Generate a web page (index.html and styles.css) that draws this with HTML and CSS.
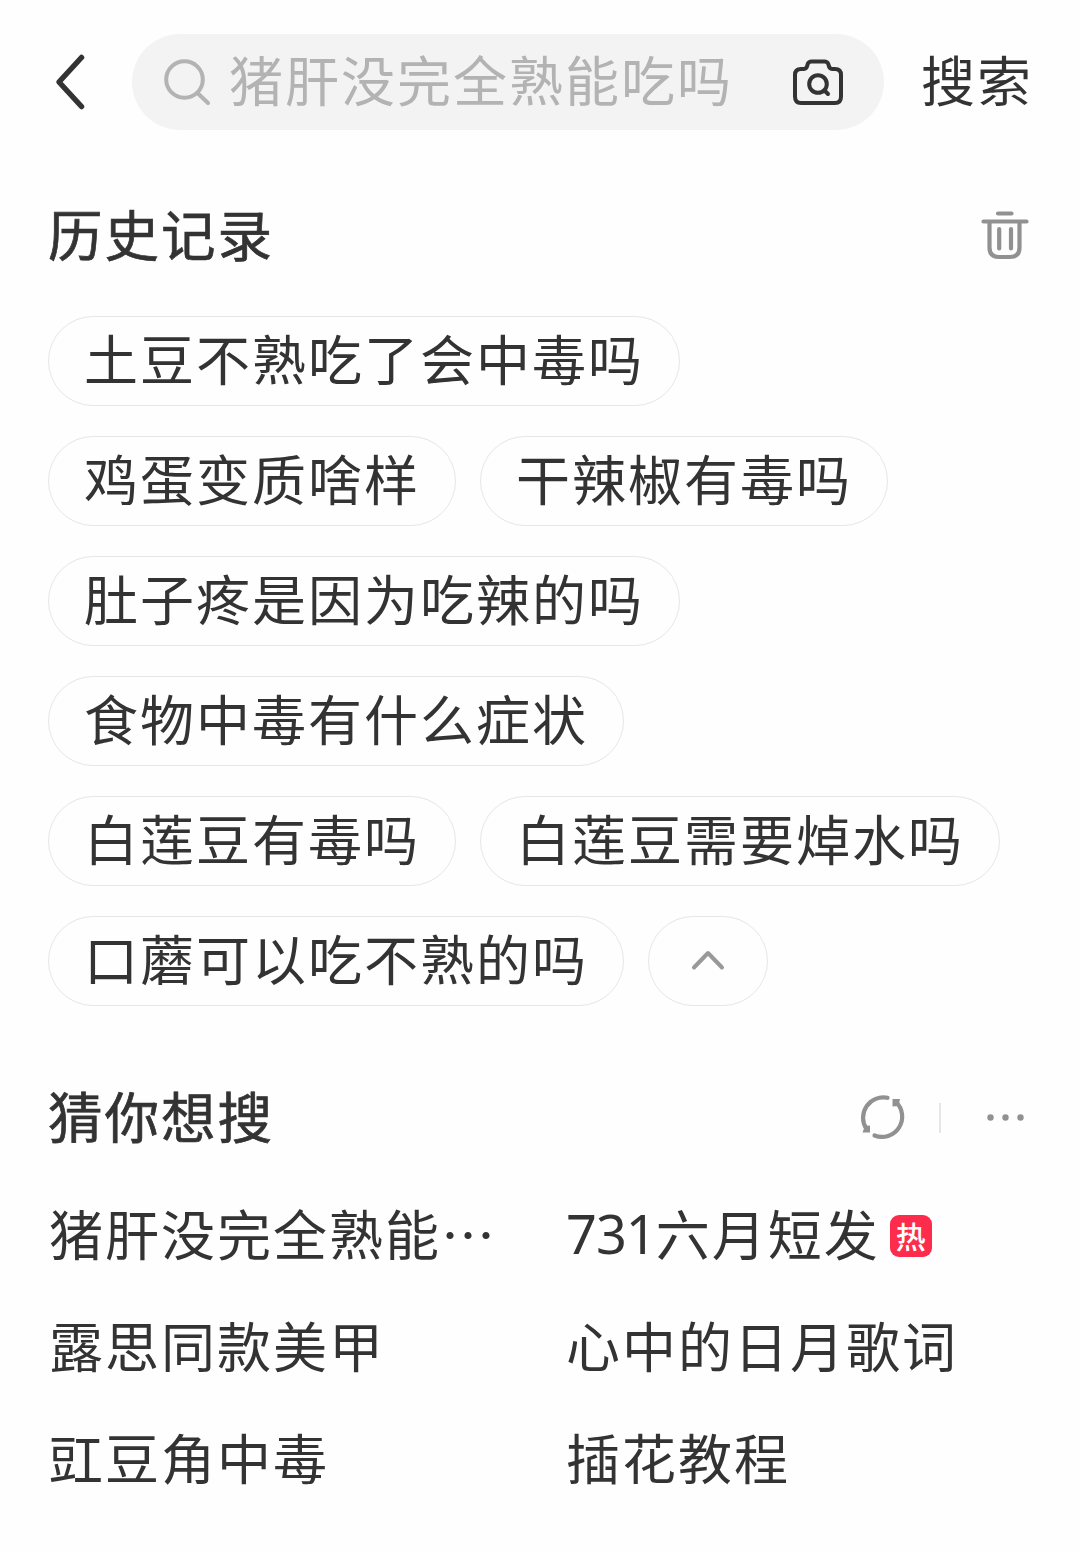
FILE: index.html
```html
<!DOCTYPE html>
<html lang="zh-CN">
<head>
<meta charset="utf-8">
<title>搜索</title>
<link rel="stylesheet" href="styles.css">
</head>
<body>
<header class="topbar">
  <svg class="back" width="36" height="60" viewBox="0 0 36 60" fill="none"><path d="M29.500 5.500L7 30L29.500 54.500"/></svg>
  <div class="searchbox">
    <svg class="lens" width="50" height="50" viewBox="0 0 50 50" fill="none"><circle cx="21.500" cy="22.500" r="18.300"/><path d="M35 36.500L45 46"/></svg>
    <span class="query">猪肝没完全熟能吃吗</span>
    <svg class="camera" width="54" height="48" viewBox="0 0 54 48" fill="none"><path d="M10 11H12.500Q15 11 16 8.500L16.700 6Q17.800 3.500 20.500 3.500H33.500Q36.200 3.500 37.300 6L38 8.500Q39 11 41.500 11H44Q50 11 50 17V38.500Q50 45 44 45H10Q4 45 4 38.500V17Q4 11 10 11Z"/><circle cx="27" cy="26" r="8.800"/><path d="M33.500 32.500L37 36"/></svg>
  </div>
  <span class="submit">搜索</span>
</header>
<main>
  <section class="history">
    <div class="head">
      <h2>历史记录</h2>
      <svg class="trash" width="48" height="50" viewBox="0 0 48 50" fill="none"><path d="M17 2.500H30.500M2.500 10.500H45.500M8.500 11V36.500Q8.500 46 18 46H29Q38.500 46 38.500 36.500V11M18.200 18V37.500M30 18V37.500"/></svg>
    </div>
    <div class="chips">
      <span class="chip">土豆不熟吃了会中毒吗</span>
      <span class="chip">鸡蛋变质啥样</span>
      <span class="chip">干辣椒有毒吗</span>
      <span class="chip">肚子疼是因为吃辣的吗</span>
      <span class="chip">食物中毒有什么症状</span>
      <span class="chip">白莲豆有毒吗</span>
      <span class="chip">白莲豆需要焯水吗</span>
      <span class="chip">口蘑可以吃不熟的吗</span>
      <span class="chip fold"><svg width="36" height="24" viewBox="0 0 36 24" fill="none"><path d="M4 18.500L18 4L32 18.500"/></svg></span>
    </div>
  </section>
  <section class="guess">
    <div class="head">
      <h2>猜你想搜</h2>
      <div class="tools">
        <svg class="refresh" width="48" height="48" viewBox="0 0 48 48"><path class="arc" d="M28.500 3.800A20.300 20.300 0 0 0 7.500 35M15.500 41.500A20.300 20.300 0 0 0 37 8"/><path class="tip" d="M33.500 5H41L39.500 12L33.500 12.500ZM3.500 38.500L6 32L11 31.500V38.500Z"/></svg>
        <i class="rule"></i>
        <svg class="more" width="40" height="8" viewBox="0 0 40 8"><circle cx="4.500" cy="3.500" r="3.200"/><circle cx="19.500" cy="3.500" r="3.200"/><circle cx="34.500" cy="3.500" r="3.200"/></svg>
      </div>
    </div>
    <div class="grid">
      <span>猪肝没完全熟能<b class="dots">⋯</b></span>
      <span><span class="num">731</span>六月短发<em class="hot">热</em></span>
      <span>露思同款美甲</span>
      <span>心中的日月歌词</span>
      <span>豇豆角中毒</span>
      <span>插花教程</span>
    </div>
  </section>
</main>
</body>
</html>
```
FILE: styles.css
```css
* { box-sizing: border-box; }
body {
  margin: 0;
  background: #fefefe;
  color: #333;
  font: 54px/80px "Noto Sans CJK SC", sans-serif;
  letter-spacing: 2px;
  white-space: nowrap;
}
svg { display: block; flex: none; stroke-linecap: round; stroke-linejoin: round; }
.topbar {
  display: flex;
  align-items: center;
  height: 164px;
  padding: 0 0 0 52px;
}
.back { stroke: #333; stroke-width: 5.5; }
.searchbox {
  display: flex;
  flex: none;
  align-items: center;
  width: 752px;
  height: 96px;
  margin: 0 37px 0 44px;
  padding: 0 39px 0 31px;
  border-radius: 48px;
  background: #f3f3f4;
}
.lens { stroke: #b3b3b3; stroke-width: 4; margin-right: 16px; }
.query { color: #b3b3b3; padding-bottom: 6px; }
.camera { stroke: #333; stroke-width: 4; margin-left: auto; }
.submit { padding-bottom: 6px; }
main { padding: 32px 48px 0; }
.head { display: flex; justify-content: space-between; align-items: center; height: 80px; }
h2 {
  margin: 0;
  padding: 0 0 7px;
  font-size: 54.5px;
  font-weight: 400;
  -webkit-text-stroke: 0.7px #333;
}
.trash { stroke: #919191; stroke-width: 4.2; margin-right: 3px; }
.chips { display: flex; flex-wrap: wrap; gap: 30px 24px; padding-top: 40px; }
.chip {
  height: 90px;
  padding: 0 35px;
  border: 1px solid #e6e6e6;
  border-radius: 45px;
  line-height: 82px;
}
.fold { display: flex; align-items: center; justify-content: center; width: 120px; padding: 0; }
.fold svg { stroke: #999; stroke-width: 4; }
.guess { padding-top: 72px; }
.tools { display: flex; align-items: center; padding-bottom: 1px; }
.arc { fill: none; stroke: #919191; stroke-width: 4.2; }
.tip { fill: #919191; }
.rule { width: 2px; height: 30px; margin: 0 45px 0 32px; background: #e6e6e6; }
.more { fill: #919191; margin-right: 6px; }
.refresh { margin-left: 2px; }
.grid {
  display: grid;
  grid-template-columns: 517px 1fr;
  grid-auto-rows: 112px;
  align-items: center;
  padding: 21px 0 0 1px;
}
.grid > span { display: flex; align-items: center; padding-bottom: 4px; }
.dots { font-weight: 400; }
.num { font-family: "Noto Sans", sans-serif; letter-spacing: -1px; }
.hot {
  width: 42px;
  height: 42px;
  margin: 6px 0 0 10px;
  border-radius: 9px;
  background: #fe2c4c;
  color: #fff;
  font: 500 30px/40px "Noto Sans CJK SC", sans-serif;
  letter-spacing: 0;
  text-align: center;
}
```
